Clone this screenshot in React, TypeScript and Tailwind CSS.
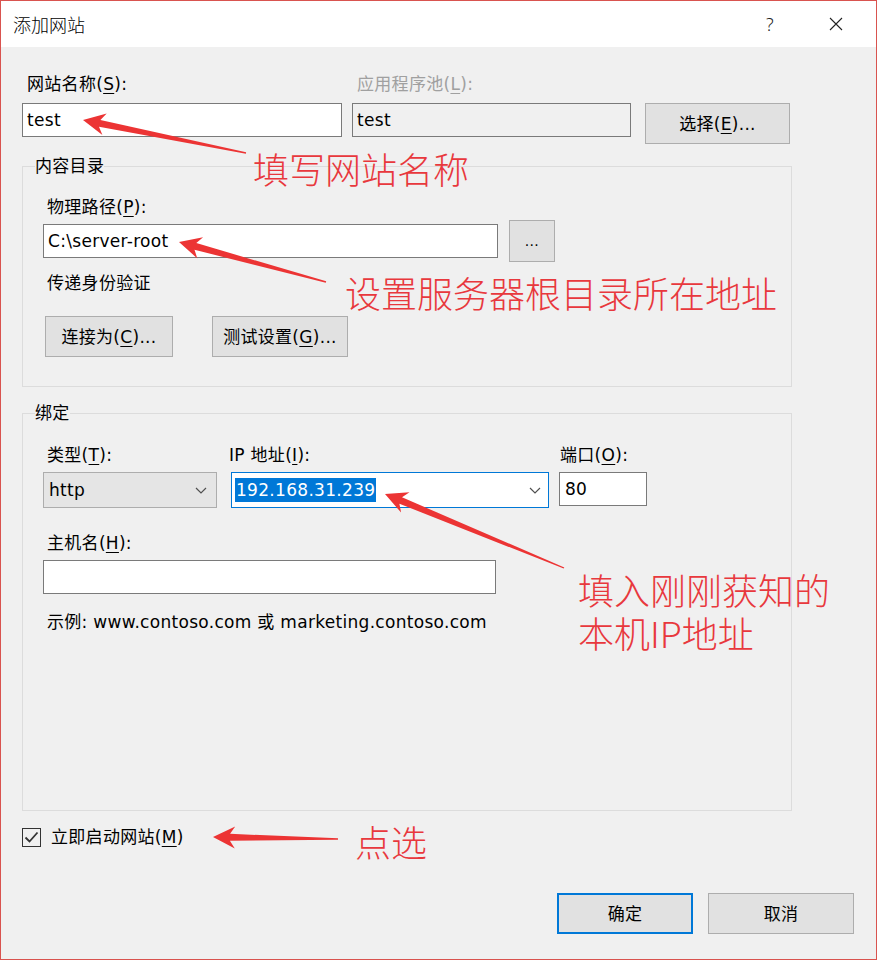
import React from 'react';

type Pt = [number, number];

// tapered arrow, tip = point of the head, tail = thin end
function arrowPoints(tip: Pt, tail: Pt): string {
  const dx = tail[0] - tip[0];
  const dy = tail[1] - tip[1];
  const len = Math.hypot(dx, dy);
  const ux = dx / len;
  const uy = dy / len;
  const nx = -uy;
  const ny = ux;
  const at = (a: number, b: number) => `${(tip[0] + ux * a + nx * b).toFixed(1)},${(tip[1] + uy * a + ny * b).toFixed(1)}`;
  return [at(0, 0), at(22, 11), at(17, 3.5), at(len, 0.7), at(len, -0.7), at(17, -3.5), at(22, -11)].join(' ');
}

const arrows: { tip: Pt; tail: Pt }[] = [
  { tip: [83, 120], tail: [246, 153] },
  { tip: [179, 242], tail: [326, 282] },
  { tip: [385, 494], tail: [564, 568] },
  { tip: [213, 837], tail: [338, 839] },
];

const Mn = ({ children }: { children: React.ReactNode }) => (
  <span className="underline underline-offset-[3px] decoration-1">{children}</span>
);

const Chevron = () => (
  <svg width="12" height="7" viewBox="0 0 12 7" fill="none">
    <polyline points="1,1 6,6 11,1" stroke="#505050" strokeWidth="1.2" />
  </svg>
);

const btn = 'bg-[#e1e1e1] border border-[#adadad] flex items-center justify-center';
const box = 'bg-white border border-[#7a7a7a] flex items-center';

export default function App() {
  return (
    <div className="relative w-[877px] h-[960px] font-['DejaVu_Sans','Noto_Sans_CJK_SC',sans-serif] text-[17px] leading-[22px] tracking-[0.3px] text-black">
      <div className="w-full h-full border border-[#d9534f] bg-[#f0f0f0] flex flex-col">
        {/* title bar */}
        <div className="h-[46px] bg-white flex items-center shrink-0">
          <span className="ml-[12px] text-[18px] tracking-normal font-['Noto_Sans_CJK_SC',sans-serif] font-light">添加网站</span>
          <span className="ml-auto text-[18px] font-['Noto_Sans',sans-serif] font-light text-[#222]">?</span>
          <svg className="ml-[55px] mr-[33px]" width="14" height="14" viewBox="0 0 14 14">
            <path d="M1 1L13 13M13 1L1 13" stroke="#222" strokeWidth="1.1" />
          </svg>
        </div>

        <div className="flex-1 flex flex-col pl-[21px]">
          {/* name + app pool */}
          <div className="mt-[26px] flex items-start">
            <div className="w-[320px]">
              <div className="pl-[5px] h-[22px]">网站名称(<Mn>S</Mn>):</div>
              <div className={`${box} mt-[8px] h-[34px] pl-[4px]`}>test</div>
            </div>
            <div className="ml-[10px] w-[279px]">
              <div className="pl-[5px] h-[22px] text-[#a0a0a0]">应用程序池(<Mn>L</Mn>):</div>
              <div className="mt-[8px] h-[34px] pl-[4px] flex items-center bg-[#f0f0f0] border border-[#7a7a7a]">test</div>
            </div>
            <button className={`${btn} ml-[14px] mt-[30px] w-[145px] h-[41px]`}>选择(<Mn>E</Mn>)...</button>
          </div>

          {/* content directory */}
          <div className="relative mt-[22px] w-[770px] h-[221px] border border-[#dcdcdc] flex flex-col">
            <span className="absolute left-[12px] top-[-12px] bg-[#f0f0f0]">内容目录</span>
            <div className="mt-[29px] ml-[24px]">物理路径(<Mn>P</Mn>):</div>
            <div className="mt-[2px] ml-[20px] flex items-center">
              <div className={`${box} w-[455px] h-[34px] pl-[4px]`}>C:\server-root</div>
              <button className={`${btn} ml-[11px] w-[46px] h-[42px] text-[14px]`}>...</button>
            </div>
            <div className="mt-[10px] ml-[24px]">传递身份验证</div>
            <div className="mt-[22px] ml-[22px] flex">
              <button className={`${btn} w-[128px] h-[41px]`}>连接为(<Mn>C</Mn>)...</button>
              <button className={`${btn} ml-[39px] w-[136px] h-[41px]`}>测试设置(<Mn>G</Mn>)...</button>
            </div>
          </div>

          {/* binding */}
          <div className="relative mt-[26px] w-[770px] h-[398px] border border-[#dcdcdc] flex flex-col">
            <span className="absolute left-[12px] top-[-12px] bg-[#f0f0f0]">绑定</span>
            <div className="mt-[30px] ml-[20px] flex items-start">
              <div className="w-[174px]">
                <div className="pl-[4px]">类型(<Mn>T</Mn>):</div>
                <div className="mt-[6px] h-[36px] bg-[#e5e5e5] border border-[#adadad] flex items-center justify-between pl-[5px] pr-[9px]">
                  <span>http</span>
                  <Chevron />
                </div>
              </div>
              <div className="ml-[14px] w-[318px]">
                <div className="-ml-[2px]">IP 地址(<Mn>I</Mn>):</div>
                <div className="mt-[6px] h-[36px] bg-white border border-[#0078d7] flex items-center justify-between pl-[3px] pr-[7px]">
                  <span className="bg-[#0078d7] text-white px-[1px] leading-[24px]">192.168.31.239</span>
                  <Chevron />
                </div>
              </div>
              <div className="ml-[10px] w-[88px]">
                <div className="pl-[1px]">端口(<Mn>O</Mn>):</div>
                <div className={`${box} mt-[6px] h-[34px] pl-[5px]`}>80</div>
              </div>
            </div>
            <div className="mt-[24px] ml-[24px]">主机名(<Mn>H</Mn>):</div>
            <div className={`${box} mt-[6px] ml-[20px] w-[453px] h-[34px]`} />
            <div className="mt-[17px] ml-[24px]">示例: www.contoso.com 或 marketing.contoso.com</div>
          </div>

          {/* start now */}
          <div className="mt-[15px] h-[22px] flex items-center">
            <div className="w-[19px] h-[19px] border border-[#333] bg-[#f0f0f0] flex items-center justify-center">
              <svg width="15" height="13" viewBox="0 0 15 13" fill="none">
                <polyline points="1.5,6.5 5.5,10.5 13.5,1.5" stroke="#333" strokeWidth="1.8" />
              </svg>
            </div>
            <span className="ml-[10px]">立即启动网站(<Mn>M</Mn>)</span>
          </div>

          {/* ok / cancel */}
          <div className="mt-auto mb-[25px] mr-[22px] flex justify-end">
            <button className="w-[136px] h-[41px] bg-[#e1e1e1] border-2 border-[#0078d7] flex items-center justify-center">确定</button>
            <button className={`${btn} ml-[15px] w-[146px] h-[41px]`}>取消</button>
          </div>
        </div>
      </div>

      {/* red annotations */}
      <svg className="absolute left-0 top-0 pointer-events-none" width="877" height="960">
        {arrows.map((a, i) => (
          <polygon key={i} points={arrowPoints(a.tip, a.tail)} fill="#ec3434" />
        ))}
      </svg>
      <div className="absolute inset-0 pointer-events-none font-['Noto_Sans_CJK_SC',sans-serif] font-light tracking-normal text-[36px] leading-[38px] text-[#e8383d]">
        <span className="absolute left-[253px] top-[149px] whitespace-nowrap">填写网站名称</span>
        <span className="absolute left-[345px] top-[273px] whitespace-nowrap">设置服务器根目录所在地址</span>
        <div className="absolute left-[578px] top-[568px] leading-[43px] whitespace-pre-line">{'填入刚刚获知的\n本机IP地址'}</div>
        <span className="absolute left-[355px] top-[822px] whitespace-nowrap">点选</span>
      </div>
    </div>
  );
}
